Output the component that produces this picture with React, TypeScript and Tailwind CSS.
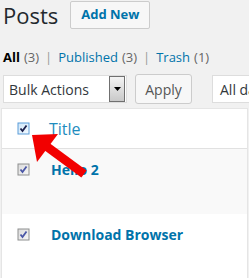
import React from 'react'

const font = { fontFamily: '"Open Sans", "Noto Sans", sans-serif' }

const Check = ({ focused }: { focused?: boolean }) => (
  <svg width="13" height="13" viewBox="0 0 13 13" className="block">
    <defs>
      <linearGradient id={focused ? 'cbf' : 'cbn'} x1="0" y1="0" x2="1" y2="1">
        <stop offset="0" stopColor={focused ? '#cfe6f8' : '#dcdcdc'} />
        <stop offset="1" stopColor={focused ? '#f4faff' : '#f6f6f6'} />
      </linearGradient>
    </defs>
    <rect x="0.5" y="0.5" width="12" height="12" fill={focused ? '#5b9dd9' : '#8e8f8f'} />
    <rect x="1.5" y="1.5" width="10" height="10" fill={`url(#${focused ? 'cbf' : 'cbn'})`} />
    <path
      d="M3.5 6.5 L5.5 9 L9.5 3.5"
      fill="none"
      stroke={focused ? '#1b1f4a' : '#4a56a6'}
      strokeWidth="1.8"
    />
  </svg>
)

const Row = ({ title, alt }: { title: string; alt?: boolean }) => (
  <div className={`flex h-[65px] items-start pt-[13px] ${alt ? 'bg-[#f9f9f9]' : 'bg-white'}`}>
    <div className="ml-[15px] w-[34px] pt-[1px]">
      <Check />
    </div>
    <a className="text-[14px] font-bold leading-[15px] text-[#0073aa]">{title}</a>
  </div>
)

export default function App() {
  return (
    <div className="relative h-[278px] w-[249px] overflow-hidden bg-[#f1f1f1] text-[#444]" style={font}>
      {/* Header */}
      <div className="flex items-center pt-[1px]">
        <h1 className="ml-[3px] text-[22px] leading-[28px] text-[#23282d]">Posts</h1>
        <button className="ml-[12px] h-[28px] w-[80px] shrink-0 rounded-[2px] border border-[#cccccc] bg-[#f7f7f7] text-[13px] font-bold text-[#0073aa]">
          Add New
        </button>
      </div>

      {/* Filters */}
      <div className="mt-[20px] ml-[3px] flex items-center whitespace-nowrap text-[13px] leading-[16px] text-[#555]">
        <span className="font-bold text-black">All</span>
        <span className="ml-[4px] text-[#666]">(3)</span>
        <span className="mx-[6px] text-[#999]">|</span>
        <span className="text-[#0073aa]">Published</span>
        <span className="ml-[4px] text-[#666]">(3)</span>
        <span className="mx-[6px] text-[#999]">|</span>
        <span className="text-[#0073aa]">Trash</span>
        <span className="ml-[4px] text-[#666]">(1)</span>
      </div>

      {/* Actions */}
      <div className="mt-[9px] flex items-center">
        <div className="ml-[3px] flex h-[28px] w-[124px] shrink-0 items-center border border-[#dddddd] bg-white">
          <span className="ml-[5px] flex-1 whitespace-nowrap text-[14px] text-[#32373c]">Bulk Actions</span>
          <div className="mr-[1px] flex h-[26px] w-[16px] items-center justify-center border border-[#707070] bg-gradient-to-b from-[#f4f4f4] to-[#c9c9c9]">
            <svg width="7" height="4" viewBox="0 0 7 4">
              <path d="M0 0 H7 L3.5 4 Z" fill="#000" />
            </svg>
          </div>
        </div>
        <button className="ml-[8px] h-[30px] w-[57px] shrink-0 rounded-[3px] border border-[#cccccc] bg-[#f7f7f7] text-[14px] text-[#555]">
          Apply
        </button>
        <div className="ml-[20px] flex h-[28px] w-[120px] shrink-0 items-center border border-[#dddddd] bg-white">
          <span className="ml-[7px] whitespace-nowrap text-[14px] text-[#32373c]">All dates</span>
        </div>
      </div>

      {/* Table */}
      <div className="ml-[1px] mt-[4px] w-[247px] border border-[#e5e5e5] bg-white">
        <div className="flex h-[40px] items-start border-b border-[#e1e1e1] pt-[13px]">
          <div className="ml-[15px] w-[32px]">
            <Check focused />
          </div>
          <span className="text-[16px] leading-[14px] text-[#1e8cbe]">Title</span>
        </div>
        <Row title="Hello 2" alt />
        <Row title="Download Browser" />
      </div>

      {/* Red arrow overlay */}
      <svg className="pointer-events-none absolute left-0 top-0" width="249" height="278">
        <line x1="84" y1="174" x2="46" y2="146" stroke="#f20000" strokeWidth="9" />
        <polygon points="32,135 58,134 37,162" fill="#f20000" />
      </svg>
    </div>
  )
}
